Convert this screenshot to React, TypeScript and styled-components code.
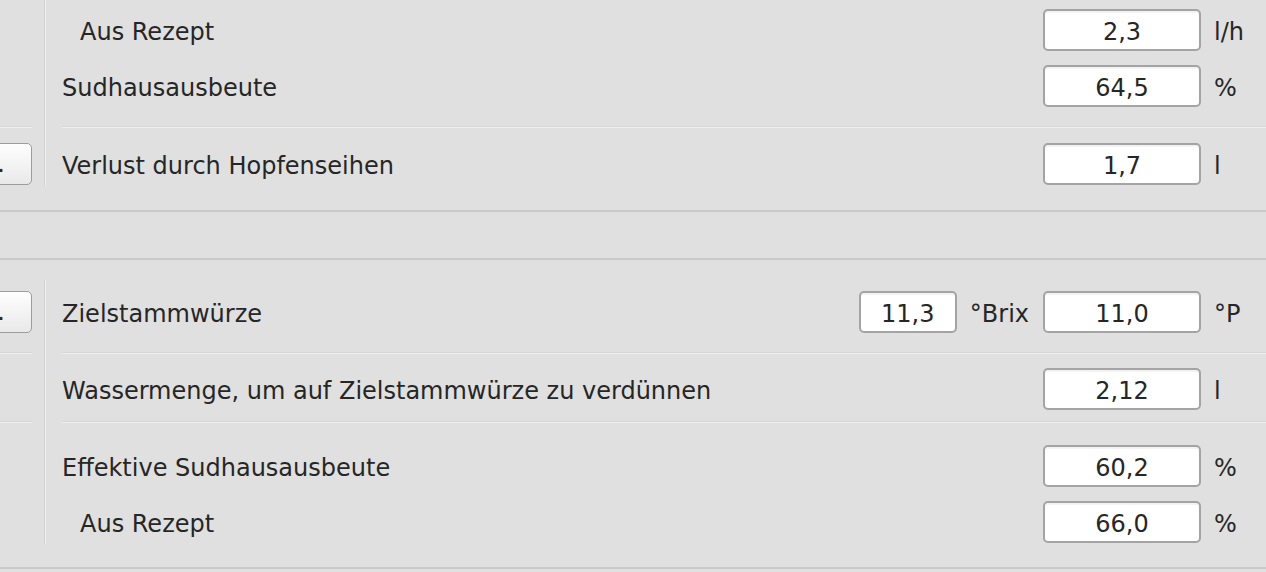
import React from 'react';
import styled, { createGlobalStyle } from 'styled-components';

const GlobalStyle = createGlobalStyle`
  html, body {
    margin: 0;
    padding: 0;
    background: #e0e0e0;
    overflow: hidden;
  }
  body {
    font-family: "DejaVu Sans", Verdana, sans-serif;
    font-size: 24px;
    color: #262626;
  }
`;

const Page = styled.div`
  width: 1266px;
  height: 572px;
  background: #e0e0e0;
`;

const Section = styled.section<{ pt: number; pb: number; rows: number }>`
  display: grid;
  grid-template-columns: 32px 30px 1fr;
  grid-template-rows: repeat(${(p) => p.rows}, auto);
  padding: ${(p) => p.pt}px 0 ${(p) => p.pb}px;
  border-bottom: 2px solid #c9c9c9;
`;

const EmptyBand = styled.div`
  height: 46px;
  border-bottom: 2px solid #c9c9c9;
`;

const VRule = styled.div<{ rows: number }>`
  grid-column: 2;
  grid-row: 1 / span ${(p) => p.rows};
  width: 2px;
  margin-left: 12px;
  background: linear-gradient(to right, #d2d2d2 50%, #efefef 50%);
`;

const Cell = styled.div<{ col: number; pt: number; pb: number; divided?: boolean }>`
  grid-column: ${(p) => p.col};
  display: flex;
  flex-direction: column;
  gap: 14px;
  padding: ${(p) => p.pt}px 0 ${(p) => p.pb}px;
  border-bottom: ${(p) => (p.divided ? '1px solid #d6d6d6' : 'none')};
  box-shadow: ${(p) => (p.divided ? '0 1px 0 #efefef' : 'none')};
  margin-bottom: ${(p) => (p.divided ? '1px' : '0')};
`;

const MoreButton = styled.div`
  box-sizing: border-box;
  height: 42px;
  width: 64px;
  margin-left: -32px;
  padding-right: 26px;
  text-align: right;
  line-height: 40px;
  border: 1.5px solid #9c9c9c;
  border-radius: 5px;
  background: linear-gradient(#fefefe, #e9e9e9);
  color: #262626;
`;

const Row = styled.div`
  display: flex;
  align-items: center;
  height: 42px;
`;

const Label = styled.div<{ indent?: boolean }>`
  flex: 1;
  padding-left: ${(p) => (p.indent ? '18px' : '0')};
  padding-top: 3px;
  white-space: nowrap;
`;

const Field = styled.input<{ w?: number }>`
  flex-shrink: 0;
  box-sizing: border-box;
  width: ${(p) => p.w ?? 158}px;
  height: 42px;
  border: 2px solid #a4a4a4;
  border-radius: 5px;
  background: #fff;
  box-shadow: inset 0 2px 1px rgba(0, 0, 0, 0.05);
  font-family: "DejaVu Sans", Verdana, sans-serif;
  font-size: 24px;
  color: #262626;
  text-align: center;
  padding: 3px 4px 0;
  outline: none;
`;

const Unit = styled.div<{ w?: number }>`
  flex-shrink: 0;
  margin-left: 13px;
  padding-top: 3px;
  width: ${(p) => (p.w ? `${p.w}px` : 'auto')};
  margin-right: ${(p) => (p.w ? '0' : '14px')};
  white-space: nowrap;
`;

type Item = { label: string; value: string; unit: string; indent?: boolean };

const ValueRow = ({ label, value, unit, indent }: Item) => (
  <Row>
    <Label indent={indent}>{label}</Label>
    <Field readOnly value={value} />
    <Unit w={52}>{unit}</Unit>
  </Row>
);

export default function App() {
  return (
    <Page>
      <GlobalStyle />
      <Section pt={0} pb={24} rows={2}>
        <VRule rows={2} />
        <Cell col={1} pt={9} pb={19} divided style={{ gridRow: 1 }} />
        <Cell col={3} pt={9} pb={19} divided style={{ gridRow: 1 }}>
          <ValueRow label="Aus Rezept" value="2,3" unit="l/h" indent />
          <ValueRow label="Sudhausausbeute" value="64,5" unit="%" />
        </Cell>
        <Cell col={1} pt={15} pb={1} style={{ gridRow: 2 }}>
          <MoreButton>...</MoreButton>
        </Cell>
        <Cell col={3} pt={15} pb={1} style={{ gridRow: 2 }}>
          <ValueRow label="Verlust durch Hopfenseihen" value="1,7" unit="l" />
        </Cell>
      </Section>

      <EmptyBand />

      <Section pt={20} pb={23} rows={3}>
        <VRule rows={3} />
        <Cell col={1} pt={11} pb={19} divided style={{ gridRow: 1 }}>
          <MoreButton>...</MoreButton>
        </Cell>
        <Cell col={3} pt={11} pb={19} divided style={{ gridRow: 1 }}>
          <Row>
            <Label>Zielstammwürze</Label>
            <Field readOnly value="11,3" w={98} />
            <Unit>°Brix</Unit>
            <Field readOnly value="11,0" />
            <Unit w={52}>°P</Unit>
          </Row>
        </Cell>
        <Cell col={1} pt={14} pb={11} divided style={{ gridRow: 2 }} />
        <Cell col={3} pt={14} pb={11} divided style={{ gridRow: 2 }}>
          <ValueRow label="Wassermenge, um auf Zielstammwürze zu verdünnen" value="2,12" unit="l" />
        </Cell>
        <Cell col={1} pt={22} pb={1} style={{ gridRow: 3 }} />
        <Cell col={3} pt={22} pb={1} style={{ gridRow: 3 }}>
          <ValueRow label="Effektive Sudhausausbeute" value="60,2" unit="%" />
          <ValueRow label="Aus Rezept" value="66,0" unit="%" indent />
        </Cell>
      </Section>
    </Page>
  );
}
